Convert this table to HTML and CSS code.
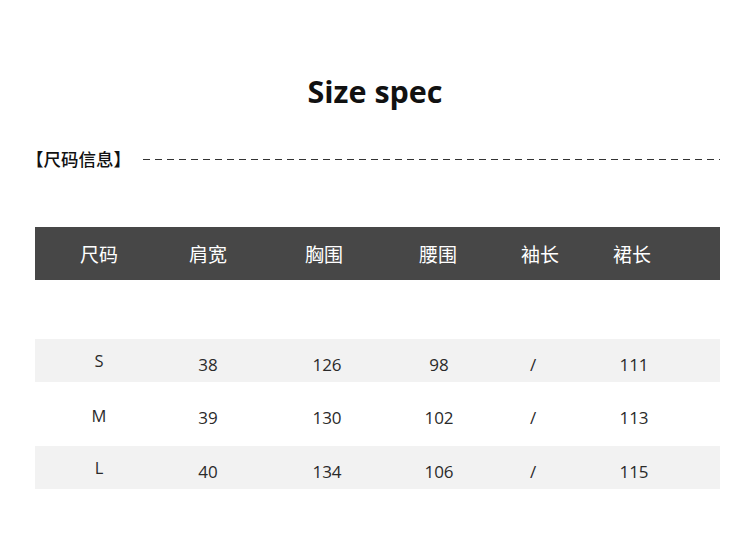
FILE: index.html
```html
<!DOCTYPE html>
<html lang="zh">
<head>
<meta charset="utf-8">
<link rel="stylesheet" href="styles.css">
</head>
<body>
<div class="page">
  <h1 class="title">Size spec</h1>
  <div class="section">
    <span class="section-label">【尺码信息】</span>
    <span class="dashes"></span>
  </div>
  <div class="table">
    <div class="head">
      <span>尺码</span><span>肩宽</span><span>胸围</span><span>腰围</span><span>袖长</span><span>裙长</span>
    </div>
    <div class="rows">
      <div class="row shaded">
        <span class="size">S</span><span>38</span><span>126</span><span>98</span><span>/</span><span>111</span>
      </div>
      <div class="row tall">
        <span class="size">M</span><span>39</span><span>130</span><span>102</span><span>/</span><span>113</span>
      </div>
      <div class="row shaded">
        <span class="size">L</span><span>40</span><span>134</span><span>106</span><span>/</span><span>115</span>
      </div>
    </div>
  </div>
</div>
</body>
</html>
```

FILE: styles.css
```css
html, body {
  margin: 0;
  padding: 0;
  background: #ffffff;
}

.page {
  width: 750px;
  height: 555px;
  padding-top: 71px;
  box-sizing: border-box;
  font-family: "Open Sans", "Noto Sans CJK SC", sans-serif;
  color: #222;
}

.title {
  margin: 0;
  text-align: center;
  font-family: "Open Sans", sans-serif;
  font-weight: 700;
  font-size: 30.5px;
  line-height: 40px;
  color: #111;
}

.section {
  display: flex;
  align-items: center;
  margin-top: 36px;
  padding-left: 26px;
  padding-right: 30px;
  height: 24px;
}

.section-label {
  font-family: "Noto Sans CJK SC", sans-serif;
  font-weight: 500;
  font-size: 17.5px;
  line-height: 24px;
  color: #111;
}

.dashes {
  flex: 1;
  height: 1px;
  margin-left: 12px;
  margin-top: 1px;
  background: repeating-linear-gradient(to right, #333 0 7px, transparent 7px 12px);
}

.table {
  margin: 56px 30px 0 35px;
}

.head {
  display: grid;
  grid-template-columns: 128px 90px 142px 86px 118px 66px 1fr;
  align-items: center;
  height: 53px;
  background: #474747;
  color: #ffffff;
  font-family: "Noto Sans CJK SC", sans-serif;
  font-size: 19px;
  line-height: 24px;
}

.head span {
  text-align: center;
  padding-top: 1px;
}

.rows {
  margin-top: 59px;
}

.row {
  display: grid;
  grid-template-columns: 128px 90px 148px 76px 112px 90px 1fr;
  align-items: center;
  height: 43px;
  font-family: "Open Sans", sans-serif;
  font-size: 17px;
  line-height: 22px;
  color: #2a2a2a;
}

.row.tall {
  height: 64px;
}

.row.shaded {
  background: #f2f2f2;
}

.row span {
  text-align: center;
  padding-top: 8px;
}

.row .size {
  padding-top: 0;
  font-size: 16.5px;
}

.row.tall .size {
  padding-top: 3px;
}
```
